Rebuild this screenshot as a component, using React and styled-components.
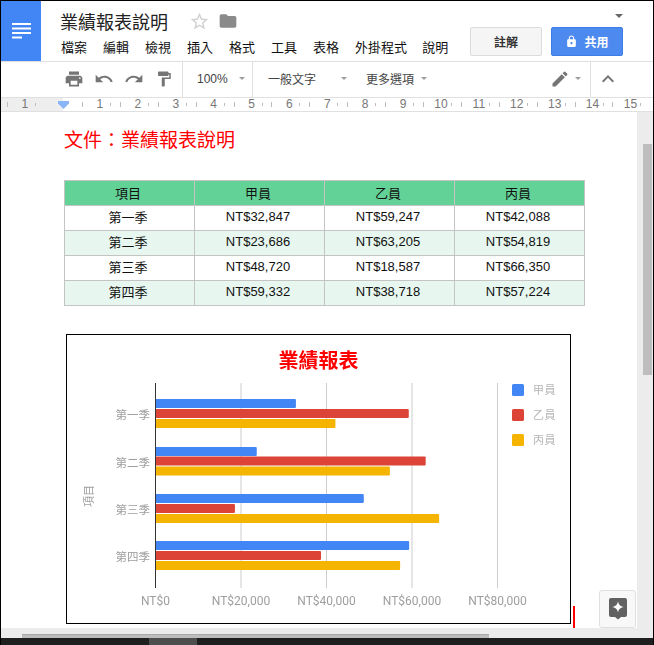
import React from 'react'
import styled, { createGlobalStyle } from 'styled-components'
import { MdPrint, MdUndo, MdRedo, MdFormatPaint, MdEdit, MdKeyboardArrowUp, MdLock, MdFolder, MdStarBorder } from 'react-icons/md'

const GlobalStyle = createGlobalStyle`
  html, body { margin: 0; padding: 0; background: #fff; overflow: hidden; }
  * { box-sizing: border-box; }
`

const FONT = '"Liberation Sans", Arial, "Noto Sans CJK TC", sans-serif'

const menus = ['檔案', '編輯', '檢視', '插入', '格式', '工具', '表格', '外掛程式', '說明']
const rows = [
  ['第一季', 32847, 59247, 42088],
  ['第二季', 23686, 63205, 54819],
  ['第三季', 48720, 18587, 66350],
  ['第四季', 59332, 38718, 57224],
]
const series = [
  { name: '甲員', color: '#4285f4' },
  { name: '乙員', color: '#db4437' },
  { name: '丙員', color: '#f4b400' },
]
const barTops = [[399, 409, 419], [447, 456.5, 466.5], [494, 504, 514], [541, 551, 561]]
const money = n => 'NT$' + n.toLocaleString('en-US')

const Chart = () => {
  const left = 155.5
  const step = 85.5
  const scale = step / 20000
  return (
    <ChartSvg width="505" height="290" viewBox="66 334 505 290">
      <text x="318.5" y="368" textAnchor="middle" fontSize="20" fontWeight="700" fill="#ff0000">業績報表</text>
      {[1, 2, 3, 4].map(i => (
        <line key={i} x1={left + step * i} x2={left + step * i} y1="383" y2="588" stroke="#cccccc" />
      ))}
      {rows.map((row, r) => (
        <g key={row[0]}>
          <text x="150" y={barTops[r][1] + 10} textAnchor="end" fontSize="11.5" fill="#9e9e9e">{row[0]}</text>
          {series.map((s, i) => (
            <rect key={s.name} x={left} y={barTops[r][i]} width={row[i + 1] * scale} height="9" rx="1" fill={s.color} />
          ))}
        </g>
      ))}
      <line x1={left} x2={left} y1="383" y2="588" stroke="#333333" />
      {[0, 1, 2, 3, 4].map(i => (
        <text key={i} x={left + step * i} y="605" textAnchor="middle" fontSize="12" fontFamily="Roboto" fill="#9e9e9e">
          {money(i * 20000)}
        </text>
      ))}
      <text transform="translate(93 496) rotate(-90)" textAnchor="middle" fontSize="11" fill="#9e9e9e">項目</text>
      {series.map((s, i) => (
        <g key={s.name}>
          <rect x="512" y={384 + i * 25} width="12" height="12" rx="1.5" fill={s.color} />
          <text x="533" y={394 + i * 25} fontSize="11" letterSpacing="0.5" fill="#b5b5b5">{s.name}</text>
        </g>
      ))}
    </ChartSvg>
  )
}

const App = () => (
  <Frame>
    <GlobalStyle />
    <Header>
      <DocsLogo>
        <svg width="20" height="16" viewBox="0 0 20 16">
          <path d="M0 0h19v2H0zM0 4.5h19v2H0zM0 9h19v2H0zM0 13.5h10v2H0z" fill="#fff" />
        </svg>
      </DocsLogo>
      <TitleBlock>
        <TitleRow>
          <DocTitle>業績報表說明</DocTitle>
          <MdStarBorder size={21} color="#d0d0d0" />
          <MdFolder size={20} color="#8a8a8a" />
        </TitleRow>
        <MenuRow>
          {menus.map(m => <MenuItem key={m}>{m}</MenuItem>)}
        </MenuRow>
      </TitleBlock>
      <HeaderRight>
        <TopCaret />
        <Buttons>
          <CommentButton>註解</CommentButton>
          <ShareButton><MdLock size={13} />共用</ShareButton>
        </Buttons>
      </HeaderRight>
    </Header>

    <Toolbar>
      <IconGroup>
        <MdPrint size={20} />
        <MdUndo size={20} />
        <MdRedo size={20} />
        <MdFormatPaint size={18} />
      </IconGroup>
      <ZoomSelect>100%<Caret /></ZoomSelect>
      <StyleSelect>一般文字<Caret /></StyleSelect>
      <MoreSelect>更多選項<Caret /></MoreSelect>
      <Spacer />
      <EditMode><MdEdit size={20} /><Caret /></EditMode>
      <Collapse><MdKeyboardArrowUp size={24} /></Collapse>
    </Toolbar>

    <Ruler>
      <RulerGrey>
        <RulerCell>1</RulerCell>
      </RulerGrey>
      <RulerMarker />
      <RulerWhite>
        {Array.from({ length: 15 }, (_, i) => <RulerCell key={i}>{i + 1}</RulerCell>)}
      </RulerWhite>
    </Ruler>

    <Workspace>
      <Page>
        <Heading>文件：業績報表說明</Heading>
        <Table>
          <thead>
            <tr>
              {['項目', ...series.map(s => s.name)].map(h => <Th key={h}>{h}</Th>)}
            </tr>
          </thead>
          <tbody>
            {rows.map(row => (
              <Tr key={row[0]}>
                <Td>{row[0]}</Td>
                {row.slice(1).map(v => <Td key={v}>{money(v)}</Td>)}
              </Tr>
            ))}
          </tbody>
        </Table>
        <ChartRow>
          <ChartBox><Chart /></ChartBox>
          <Cursor />
        </ChartRow>
      </Page>
      <Explore>
        <svg width="18" height="22" viewBox="0 0 18 22">
          <path d="M2 0h14a2 2 0 0 1 2 2v15a2 2 0 0 1-2 2h-4l-3 2.5L6 19H2a2 2 0 0 1-2-2V2a2 2 0 0 1 2-2z" fill="#616161" />
          <path d="M9 3.5c.6 3.2 2.3 4.9 5.5 5.5-3.2.6-4.9 2.3-5.5 5.5-.6-3.2-2.3-4.9-5.5-5.5 3.2-.6 4.9-2.3 5.5-5.5z" fill="#fff" />
        </svg>
      </Explore>
      <VScroll><VThumb /></VScroll>
    </Workspace>

    <HScroll><HThumb /></HScroll>
    <Taskbar><TaskThumb /></Taskbar>
  </Frame>
)

export default App

const Frame = styled.div`
  width: 654px;
  height: 645px;
  border-top: 1px solid #000;
  border-left: 1px solid #000;
  border-right: 1px solid #000;
  display: flex;
  flex-direction: column;
  font-family: ${FONT};
  overflow: hidden;
`

const Header = styled.header`
  height: 61px;
  flex: none;
  display: flex;
  border-bottom: 1px solid #e0e0e0;
`

const DocsLogo = styled.div`
  width: 40px;
  height: 60px;
  background: #4285f4;
  display: flex;
  align-items: center;
  justify-content: center;
  padding-left: 1px;
`

const TitleBlock = styled.div`
  width: 429px;
  padding: 9px 0 0 20px;
`

const TitleRow = styled.div`
  display: flex;
  align-items: center;
  height: 22px;
  margin-left: -1px;
  svg:nth-of-type(1) { margin-left: 21px; }
  svg:nth-of-type(2) { margin-left: 8px; }
`

const DocTitle = styled.div`
  font-size: 18px;
  color: #222;
`

const MenuRow = styled.nav`
  display: flex;
  gap: 16px;
  margin-top: 7px;
  white-space: nowrap;
`

const MenuItem = styled.span`
  font-size: 13px;
  line-height: 18px;
  color: #111;
  &:last-child { margin-left: -1px; }
`

const HeaderRight = styled.div`
  flex: 1;
  display: flex;
  flex-direction: column;
`

const TopCaret = styled.div`
  width: 0;
  height: 0;
  margin: 13px 0 0 145px;
  border: 4px solid transparent;
  border-top: 4px solid #666;
  border-bottom: 0;
`

const Buttons = styled.div`
  display: flex;
  gap: 9px;
  margin-top: 9px;
`

const CommentButton = styled.button`
  width: 72px;
  height: 29px;
  border: 1px solid #dcdcdc;
  border-radius: 2px;
  background: #f5f5f5;
  color: #333;
  font-family: ${FONT};
  font-size: 12px;
  font-weight: 700;
  padding: 0;
`

const ShareButton = styled(CommentButton)`
  border-color: #3d7de8;
  background: #4d8af0;
  color: #fff;
  display: flex;
  align-items: center;
  justify-content: center;
  gap: 6px;
`

const Toolbar = styled.div`
  height: 35px;
  flex: none;
  display: flex;
  align-items: stretch;
  color: #757575;
  font-size: 12px;
`

const IconGroup = styled.div`
  width: 182px;
  padding: 0 0 2px 63px;
  display: flex;
  align-items: center;
  gap: 10px;
  border-right: 1px solid #e0e0e0;
  svg { flex: none; }
  svg:last-child { margin-left: 1px; }
`

const ZoomSelect = styled.div`
  width: 70px;
  padding: 0 0 2px 14px;
  display: flex;
  align-items: center;
  gap: 11px;
  border-right: 1px solid #e0e0e0;
  color: #444;
`

const StyleSelect = styled.div`
  width: 98px;
  padding: 0 0 2px 15px;
  display: flex;
  align-items: center;
  gap: 25px;
  color: #444;
`

const MoreSelect = styled.div`
  display: flex;
  align-items: center;
  gap: 7px;
  padding: 0 0 2px 15px;
  color: #444;
`

const Spacer = styled.div`
  flex: 1;
`

const EditMode = styled.div`
  display: flex;
  align-items: center;
  gap: 5px;
  width: 40px;
  padding-bottom: 2px;
`

const Collapse = styled.div`
  width: 63px;
  padding: 0 0 2px 5px;
  display: flex;
  align-items: center;
  border-left: 1px solid #e0e0e0;
`

const Caret = styled.span`
  width: 0;
  height: 0;
  border: 3.5px solid transparent;
  border-top: 3.5px solid #9e9e9e;
  border-bottom: 0;
`

const Ruler = styled.div`
  height: 15px;
  flex: none;
  position: relative;
  display: flex;
  background: #fff;
  border-top: 1px solid #e0e0e0;
  border-bottom: 1px solid #e0e0e0;
  overflow: hidden;
`

const RulerGrey = styled.div`
  width: 62px;
  flex: none;
  display: flex;
  padding-left: 5px;
  background: #eeeeee;
`

const RulerWhite = styled.div`
  flex: 1;
  display: flex;
  padding-left: 18px;
`

const RulerCell = styled.span`
  width: 37.9px;
  flex: none;
  font-size: 12px;
  line-height: 13px;
  text-align: center;
  color: #777;
  background:
    linear-gradient(#bdbdbd, #bdbdbd) 1px 4px / 1px 5px no-repeat,
    linear-gradient(#bdbdbd, #bdbdbd) 29px 5px / 1px 3px no-repeat;
`

const RulerMarker = styled.div`
  position: absolute;
  left: 57px;
  top: 3px;
  width: 11px;
  height: 8px;
  background: #8ab4f8;
  clip-path: polygon(0 0, 100% 0, 100% 30%, 50% 100%, 0 30%);
`

const Workspace = styled.main`
  height: 516px;
  flex: none;
  position: relative;
  display: flex;
  background: #fff;
`

const Page = styled.div`
  flex: 1;
  padding: 17px 0 0 63px;
`

const Heading = styled.h1`
  margin: 0 0 27px;
  font-size: 19px;
  line-height: 24px;
  font-weight: 400;
  color: #ff0000;
`

const Table = styled.table`
  border-collapse: collapse;
  table-layout: fixed;
  width: 521px;
  font-size: 13px;
  color: #111;
`

const Th = styled.th`
  height: 25px;
  padding: 0 3px 2px 0;
  font-weight: 400;
  background: #63d297;
  border: 1px solid #c4c4c4;
`

const Tr = styled.tr`
  &:nth-child(even) td { background: #e7f7ef; }
`

const Td = styled.td`
  height: 25px;
  padding: 0 3px 3px 0;
  text-align: center;
  border: 1px solid #c4c4c4;
`

const ChartRow = styled.div`
  display: flex;
  align-items: flex-end;
  margin: 28px 0 0 2px;
`

const ChartBox = styled.div`
  width: 505px;
  height: 290px;
  outline: 1px solid #000;
  outline-offset: -1px;
`

const ChartSvg = styled.svg`
  display: block;
  font-family: ${FONT};
  filter: blur(0.3px);
`

const Cursor = styled.div`
  width: 2px;
  height: 22px;
  margin: 0 0 -4px 2px;
  background: #ff0000;
`

const Explore = styled.div`
  position: absolute;
  right: 17px;
  bottom: 0;
  width: 37px;
  height: 38px;
  display: flex;
  align-items: center;
  justify-content: center;
  background: #f8f8f8;
  border: 1px solid #e0e0e0;
  border-radius: 3px;
`

const VScroll = styled.div`
  width: 16px;
  flex: none;
  background: #ececec;
`

const VThumb = styled.div`
  width: 9px;
  height: 231px;
  margin: 32px 0 0 6px;
  background: #bdbdbd;
`

const HScroll = styled.div`
  height: 10px;
  flex: none;
  background: #ececec;
  padding: 6px 0 0 21px;
`

const HThumb = styled.div`
  width: 467px;
  height: 4px;
  background: #bdbdbd;
  border-top: 1px solid #a8a8a8;
`

const Taskbar = styled.div`
  height: 7px;
  flex: none;
  background: #1f1f1f;
  padding-left: 148px;
`

const TaskThumb = styled.div`
  width: 48px;
  height: 7px;
  background: #4e4e4e;
`
